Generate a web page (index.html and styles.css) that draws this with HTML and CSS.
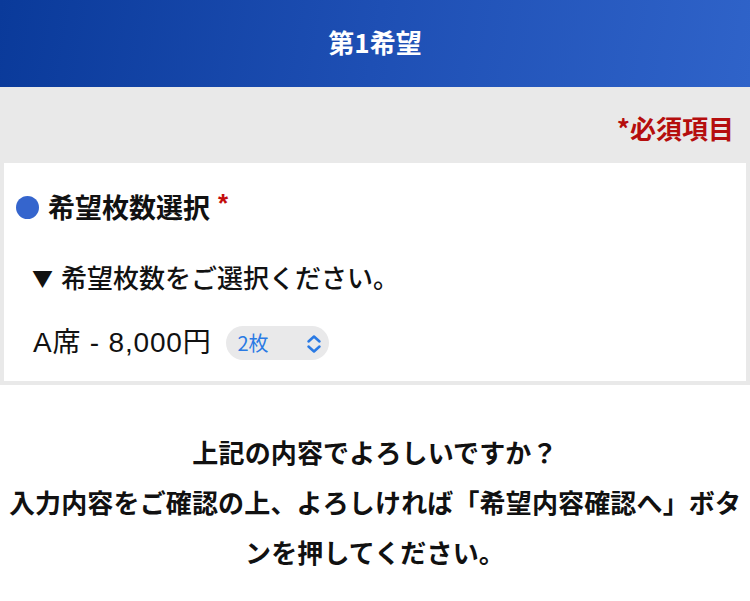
FILE: index.html
```html
<!DOCTYPE html>
<html lang="ja">
<head>
<meta charset="utf-8">
<title>第1希望</title>
<link rel="stylesheet" href="styles.css">
</head>
<body>
  <header class="hero">
    <h1 class="hero-title">第1希望</h1>
  </header>

  <div class="panel">
    <p class="required-note">*必須項目</p>
    <section class="card">
      <h2 class="card-title"><span class="dot"></span>希望枚数選択<span class="mark">*</span></h2>
      <p class="hint"><span class="hint-arrow">▼</span>希望枚数をご選択ください。</p>
      <div class="seat-row">
        <span class="seat-label">A席 - 8,000円</span>
        <div class="picker">
          <span class="picker-value">2枚</span>
          <svg class="picker-icon" width="16" height="20" viewBox="0 0 16 20" aria-hidden="true">
            <path d="M2.5 7.5 L8 2.5 L13.5 7.5 M2.5 12.5 L8 17.5 L13.5 12.5" fill="none" stroke="currentColor" stroke-width="2.5" stroke-linecap="round" stroke-linejoin="round"/>
          </svg>
        </div>
      </div>
    </section>
  </div>

  <p class="confirm">上記の内容でよろしいですか？<br>入力内容をご確認の上、よろしければ「希望内容確認へ」ボタンを押してください。</p>
</body>
</html>
```

FILE: styles.css
```css
* {
  box-sizing: border-box;
}

body {
  margin: 0;
  background: #ffffff;
  color: #111111;
  font-family: "Noto Sans CJK JP", "Noto Sans", sans-serif;
}

.hero {
  height: 87px;
  display: flex;
  align-items: center;
  justify-content: center;
  background: linear-gradient(100deg, #0a3a9a 0%, #1e4fb4 50%, #2f63c9 100%);
}

.hero-title {
  margin: 0;
  color: #ffffff;
  font-size: 26px;
  font-weight: 700;
  line-height: 1;
  padding-bottom: 3px;
}

.panel {
  background: #e9e9e9;
  padding: 0 4px 4px;
}

.required-note {
  margin: 0;
  padding: 21px 12px 15px 0;
  text-align: right;
  color: #b50e0e;
  font-size: 26px;
  font-weight: 700;
  line-height: 40px;
}

.card {
  background: #ffffff;
  padding: 24px 12px 18px;
}

.card-title {
  margin: 0;
  display: flex;
  align-items: center;
  font-size: 27px;
  font-weight: 700;
  line-height: 40px;
}

.dot {
  width: 23px;
  height: 23px;
  border-radius: 50%;
  background: #3565cd;
  margin-right: 9px;
}

.mark {
  margin: -8px 0 0 8px;
  color: #c30d0d;
  font-family: "Liberation Sans", sans-serif;
  font-size: 26px;
  font-weight: 700;
  line-height: 1;
}

.hint {
  margin: 30px 0 0 16px;
  font-size: 26px;
  font-weight: 500;
  line-height: 40px;
}

.hint-arrow {
  display: inline-block;
  font-size: 21px;
  vertical-align: 2px;
  margin-right: 8px;
}

.seat-row {
  margin: 26px 0 0 17px;
  display: flex;
  align-items: center;
  gap: 15px;
}

.seat-label {
  font-family: "Liberation Sans", "Noto Sans CJK JP", sans-serif;
  font-size: 28px;
  letter-spacing: 0.8px;
  line-height: 40px;
}

.picker {
  width: 103px;
  height: 34px;
  border-radius: 17px;
  background: #e9e9ea;
  display: flex;
  align-items: center;
  justify-content: space-between;
  padding: 0 7px 0 11px;
  color: #2a7ae4;
}

.picker-value {
  font-size: 20px;
  line-height: 1;
}

.picker-icon {
  display: block;
  margin-top: 2px;
}

.confirm {
  margin: 42px 0 0;
  padding: 0 6px;
  text-align: center;
  font-size: 26px;
  font-weight: 700;
  letter-spacing: 0.15px;
  line-height: 50px;
}
```
